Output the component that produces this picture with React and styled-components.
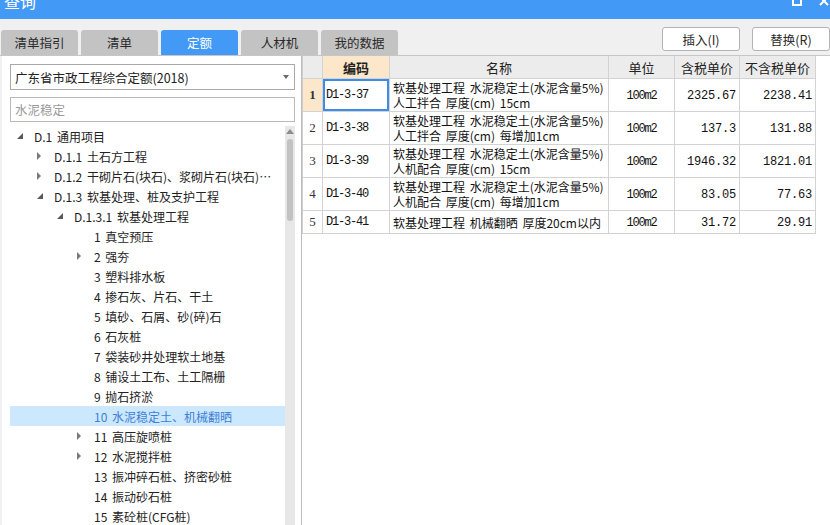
import React from 'react';
import styled, { createGlobalStyle } from 'styled-components';

const GlobalStyle = createGlobalStyle`
  html, body {
    margin: 0;
    padding: 0;
    overflow: hidden;
    background: #f0f0f0;
  }
  body {
    font-family: "Noto Sans CJK SC", "Noto Sans", sans-serif;
    color: #222;
  }
`

const Window = styled.div`
  width: 830px;
  height: 525px;
  display: flex;
  flex-direction: column;
  background: #f0f0f0;
  overflow: hidden;
`

const TitleBar = styled.div`
  height: 19px;
  flex: none;
  display: flex;
  align-items: flex-start;
  background: #4399f6;
  color: #fff;
  overflow: hidden;
`

const Title = styled.div`
  flex: 1;
  margin: -9px 0 0 4px;
  font-size: 16px;
  line-height: 20px;
`

const WinButtons = styled.div`
  display: flex;
  gap: 17px;
  margin-top: -4px;
  padding-right: 1px;
`

const Toolbar = styled.div`
  height: 36px;
  flex: none;
  display: flex;
  justify-content: space-between;
  border-bottom: 1px solid #c6c6c6;
`

const Tabs = styled.div`
  display: flex;
  gap: 3px;
  align-self: flex-end;
  padding-left: 1px;
`

const Tab = styled.div`
  width: 77px;
  height: 25px;
  line-height: 25px;
  text-align: center;
  font-size: 12.5px;
  border-radius: 3px 3px 0 0;
  background: ${p => (p.$active ? '#4399f6' : '#c3c3c3')};
  color: ${p => (p.$active ? '#fff' : '#2a2a2a')};
`

const Actions = styled.div`
  display: flex;
  gap: 12px;
  padding-top: 8px;
`

const Button = styled.button`
  width: 78px;
  height: 24px;
  padding: 0;
  background: #fff;
  border: 1px solid #b4b4b4;
  border-radius: 3px;
  font-family: inherit;
  font-size: 12.5px;
  color: #2a2a2a;
`

const Main = styled.div`
  flex: 1;
  min-height: 0;
  display: flex;
`

const LeftPane = styled.div`
  width: 299px;
  margin-left: 2px;
  padding: 8px 6px 0 8px;
  box-sizing: border-box;
  background: #fff;
  display: flex;
  flex-direction: column;
`

const Select = styled.div`
  height: 26px;
  flex: none;
  box-sizing: border-box;
  border: 1px solid #a9a9a9;
  display: flex;
  align-items: center;
  justify-content: space-between;
  padding: 0 5px 0 4px;
  font-size: 12.5px;
  color: #222;
`

const SearchBox = styled.div`
  height: 25px;
  flex: none;
  margin-top: 7px;
  box-sizing: border-box;
  border: 1px solid #b9b9b9;
  display: flex;
  align-items: center;
  padding-left: 4px;
  font-size: 12.5px;
  color: #9a9a9a;
`

const TreeArea = styled.div`
  flex: 1;
  min-height: 0;
  margin-top: 4px;
  display: flex;
`

const Tree = styled.div`
  flex: 1;
  min-width: 0;
  overflow: hidden;
`

const TreeRow = styled.div`
  height: 20px;
  display: flex;
  align-items: center;
  padding-left: ${p => 7 + p.$level * 20}px;
  font-size: 12px;
  white-space: nowrap;
  background: ${p => (p.$selected ? '#cce8ff' : 'transparent')};
  color: ${p => (p.$selected ? '#3d7fd4' : '#222')};
`

const Toggle = styled.span`
  width: 17px;
  flex: none;
  display: flex;
  align-items: center;
`

const Label = styled.span`
  overflow: hidden;
  text-overflow: ellipsis;
  padding-right: 4px;
  word-spacing: 2px;
`

const ScrollTrack = styled.div`
  width: 10px;
  flex: none;
  background: #e7e7e7;
  display: flex;
  flex-direction: column;
  align-items: center;
  padding-top: 3px;
  box-sizing: border-box;
`

const ScrollThumb = styled.div`
  width: 6px;
  height: 82px;
  margin-top: 5px;
  border-radius: 3px;
  background: #c2c2c2;
`

const RightPane = styled.div`
  flex: 1;
  background: #fff;
  border-left: 1px solid #bdbdbd;
`

const Grid = styled.div`
  width: 514px;
  border-left: 1px solid #cfcfcf;
  box-sizing: border-box;
`

const Row = styled.div`
  display: grid;
  grid-template-columns: 20px 67px 219px 66px 65px 76px;
  height: ${p => p.$h}px;
`

const Cell = styled.div`
  box-sizing: border-box;
  border-right: 1px solid #d3d3d3;
  border-bottom: 1px solid #d3d3d3;
  display: flex;
  align-items: center;
  justify-content: ${p => p.$align || 'flex-start'};
  padding: 0 3px;
  overflow: hidden;
  white-space: nowrap;
`

const HeadCell = styled(Cell)`
  justify-content: center;
  background: ${p => (p.$hot ? '#fde7cb' : '#ececec')};
  font-size: 13px;
  font-weight: ${p => (p.$hot ? 700 : 400)};
  color: #222;
`

const NumCell = styled(Cell)`
  justify-content: center;
  padding: 0;
  background: ${p => (p.$hot ? '#fde7cb' : '#fff')};
  font-family: "Liberation Serif", serif;
  font-size: 13px;
  font-weight: ${p => (p.$hot ? 700 : 400)};
  color: #333;
`

const CodeCell = styled(Cell)`
  font-family: "Liberation Mono", monospace;
  font-size: 12px;
  letter-spacing: -1.2px;
  color: #111;
  box-shadow: ${p => (p.$focus ? 'inset 0 0 0 2px #3c8de8' : 'none')};
`

const NameCell = styled(Cell)`
  flex-direction: column;
  align-items: flex-start;
  justify-content: center;
  font-size: 12px;
  line-height: 15px;
  word-spacing: 2px;
  color: #111;
`

const NameLine = styled.div`
  height: 15px;
`

const MonoCell = styled(Cell)`
  font-family: "Liberation Mono", monospace;
  font-size: 12px;
  letter-spacing: ${p => p.$spacing || 0}px;
  color: #111;
  padding: 2px 3px 0;
`

const Expanded = () => (
  <svg width="6" height="6" viewBox="0 0 6 6">
    <polygon points="6,0 6,6 0,6" fill="#595959" />
  </svg>
)

const Collapsed = () => (
  <svg width="4" height="8" viewBox="0 0 4 8">
    <polygon points="0,0 4,4 0,8" fill="#7a7a7a" />
  </svg>
)

const tree = [
  { level: 0, open: true, text: 'D.1 通用项目' },
  { level: 1, open: false, text: 'D.1.1 土石方工程' },
  { level: 1, open: false, text: 'D.1.2 干砌片石(块石)、浆砌片石(块石)、浆砌料石' },
  { level: 1, open: true, text: 'D.1.3 软基处理、桩及支护工程' },
  { level: 2, open: true, text: 'D.1.3.1 软基处理工程' },
  { level: 3, text: '1 真空预压' },
  { level: 3, open: false, text: '2 强夯' },
  { level: 3, text: '3 塑料排水板' },
  { level: 3, text: '4 掺石灰、片石、干土' },
  { level: 3, text: '5 填砂、石屑、砂(碎)石' },
  { level: 3, text: '6 石灰桩' },
  { level: 3, text: '7 袋装砂井处理软土地基' },
  { level: 3, text: '8 铺设土工布、土工隔栅' },
  { level: 3, text: '9 抛石挤淤' },
  { level: 3, text: '10 水泥稳定土、机械翻晒', selected: true },
  { level: 3, open: false, text: '11 高压旋喷桩' },
  { level: 3, open: false, text: '12 水泥搅拌桩' },
  { level: 3, text: '13 振冲碎石桩、挤密砂桩' },
  { level: 3, text: '14 振动砂石桩' },
  { level: 3, text: '15 素砼桩(CFG桩)' },
]

const rows = [
  { code: 'D1-3-37', name: ['软基处理工程 水泥稳定土(水泥含量5%)', '人工拌合 厚度(cm) 15cm'], tax: '2325.67', notax: '2238.41', h: 33 },
  { code: 'D1-3-38', name: ['软基处理工程 水泥稳定土(水泥含量5%)', '人工拌合 厚度(cm) 每增加1cm'], tax: '137.3', notax: '131.88', h: 33 },
  { code: 'D1-3-39', name: ['软基处理工程 水泥稳定土(水泥含量5%)', '人机配合 厚度(cm) 15cm'], tax: '1946.32', notax: '1821.01', h: 33 },
  { code: 'D1-3-40', name: ['软基处理工程 水泥稳定土(水泥含量5%)', '人机配合 厚度(cm) 每增加1cm'], tax: '83.05', notax: '77.63', h: 33 },
  { code: 'D1-3-41', name: ['软基处理工程 机械翻晒 厚度20cm以内'], tax: '31.72', notax: '29.91', h: 23 },
]

const tabs = ['清单指引', '清单', '定额', '人材机', '我的数据']

const App = () => (
  <Window>
    <GlobalStyle />
    <TitleBar>
      <Title>查询</Title>
      <WinButtons>
        <svg width="10" height="10" viewBox="0 0 10 10">
          <rect x="1" y="1" width="8" height="8" fill="none" stroke="#fff" strokeWidth="2" />
        </svg>
        <svg width="10" height="10" viewBox="0 0 10 10">
          <path d="M1 1 L9 9 M9 1 L1 9" stroke="#fff" strokeWidth="2" />
        </svg>
      </WinButtons>
    </TitleBar>

    <Toolbar>
      <Tabs>
        {tabs.map(t => (
          <Tab key={t} $active={t === '定额'}>{t}</Tab>
        ))}
      </Tabs>
      <Actions>
        <Button>插入(I)</Button>
        <Button>替换(R)</Button>
      </Actions>
    </Toolbar>

    <Main>
      <LeftPane>
        <Select>
          <span>广东省市政工程综合定额(2018)</span>
          <svg width="6" height="4" viewBox="0 0 6 4">
            <polygon points="0,0 6,0 3,4" fill="#6a6a6a" />
          </svg>
        </Select>
        <SearchBox>水泥稳定</SearchBox>
        <TreeArea>
          <Tree>
            {tree.map(item => (
              <TreeRow key={item.text} $level={item.level} $selected={item.selected}>
                <Toggle>
                  {item.open === true && <Expanded />}
                  {item.open === false && <Collapsed />}
                </Toggle>
                <Label>{item.text}</Label>
              </TreeRow>
            ))}
          </Tree>
          <ScrollTrack>
            <svg width="8" height="5" viewBox="0 0 8 5">
              <polygon points="4,0 8,5 0,5" fill="#8c8c8c" />
            </svg>
            <ScrollThumb />
          </ScrollTrack>
        </TreeArea>
      </LeftPane>

      <RightPane>
        <Grid>
          <Row $h={23}>
            <HeadCell />
            <HeadCell $hot>编码</HeadCell>
            <HeadCell>名称</HeadCell>
            <HeadCell>单位</HeadCell>
            <HeadCell>含税单价</HeadCell>
            <HeadCell>不含税单价</HeadCell>
          </Row>
          {rows.map((r, i) => (
            <Row key={r.code} $h={r.h}>
              <NumCell $hot={i === 0}>{i + 1}</NumCell>
              <CodeCell $focus={i === 0}>{r.code}</CodeCell>
              <NameCell>
                {r.name.map(line => (
                  <NameLine key={line}>{line}</NameLine>
                ))}
              </NameCell>
              <MonoCell $align="center" $spacing={-1.2}>100m2</MonoCell>
              <MonoCell $align="flex-end" $spacing={-0.2}>{r.tax}</MonoCell>
              <MonoCell $align="flex-end" $spacing={-0.2}>{r.notax}</MonoCell>
            </Row>
          ))}
        </Grid>
      </RightPane>
    </Main>
  </Window>
)

export default App
